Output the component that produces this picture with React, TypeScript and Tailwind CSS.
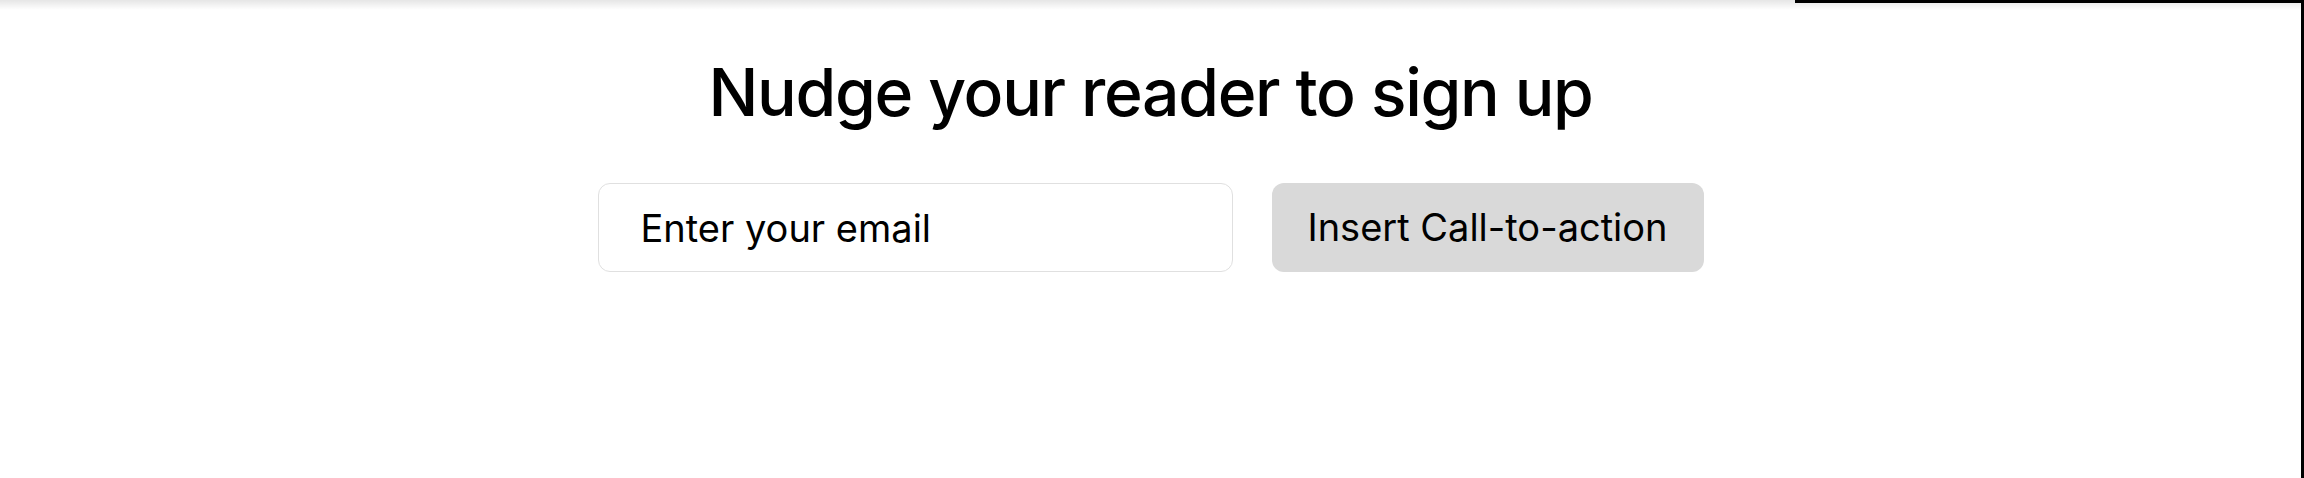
export default function App() {
  return (
    <div
      className="relative h-[478px] w-full overflow-hidden border-r-[3px] border-black bg-white text-black"
      style={{ fontFamily: 'Inter, "Noto Sans", sans-serif' }}
    >
      {/* soft shadow cast by the toolbar above */}
      <div className="pointer-events-none absolute inset-x-0 top-0 h-[10px] bg-gradient-to-b from-black/10 to-transparent" />
      {/* selection frame edge along the top right */}
      <div className="pointer-events-none absolute left-[1795px] right-0 top-0 h-[3px] bg-black" />

      <section className="flex flex-col items-center pt-[59px]">
        <h1 className="text-[66px] font-medium leading-none tracking-[-0.02em]">
          Nudge your reader to sign up
        </h1>
        <div className="mt-[58px] flex items-center gap-[39px]">
          <input
            type="email"
            placeholder="Enter your email"
            className="h-[89px] w-[635px] rounded-xl border border-[#e0e0e0] bg-white pl-[42px] text-[38px] text-black outline-none placeholder:text-black"
          />
          <button
            type="button"
            className="h-[89px] w-[432px] rounded-xl bg-[#d9d9d9] text-[38px] text-black"
          >
            Insert Call-to-action
          </button>
        </div>
      </section>
    </div>
  );
}
